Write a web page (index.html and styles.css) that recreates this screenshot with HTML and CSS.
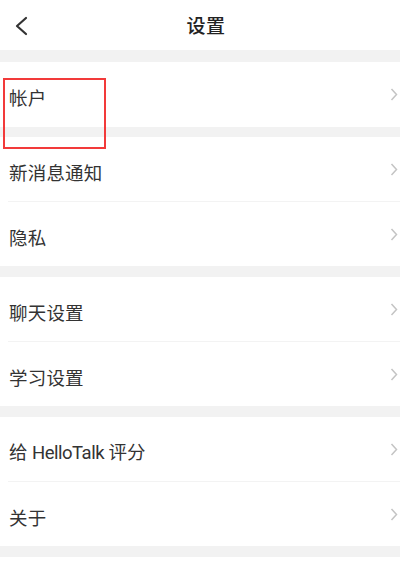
FILE: index.html
```html
<!DOCTYPE html>
<html lang="zh-CN">
<head>
<meta charset="utf-8">
<title>设置</title>
<link rel="stylesheet" href="styles.css">
</head>
<body>
<div class="page">
  <header class="topbar">
    <svg class="back" width="14" height="20" viewBox="0 0 14 20"><path d="M12 2 L3 10 L12 18" fill="none" stroke="#333" stroke-width="2.2" stroke-linecap="round" stroke-linejoin="round"/></svg>
    <h1 class="title">设置</h1>
  </header>
  <div class="gap gap-first"></div>
  <section class="group">
    <div class="row row-tall"><span class="label">帐户</span><svg class="chev" width="8" height="13" viewBox="0 0 8 13"><path d="M1.5 1 L6.5 6.5 L1.5 12" fill="none" stroke="#c4c4c4" stroke-width="1.5"/></svg></div>
  </section>
  <div class="gap gap-second"></div>
  <section class="group">
    <div class="row"><span class="label">新消息通知</span><svg class="chev" width="8" height="13" viewBox="0 0 8 13"><path d="M1.5 1 L6.5 6.5 L1.5 12" fill="none" stroke="#c4c4c4" stroke-width="1.5"/></svg></div>
    <div class="divider"></div>
    <div class="row"><span class="label">隐私</span><svg class="chev" width="8" height="13" viewBox="0 0 8 13"><path d="M1.5 1 L6.5 6.5 L1.5 12" fill="none" stroke="#c4c4c4" stroke-width="1.5"/></svg></div>
  </section>
  <div class="gap"></div>
  <section class="group">
    <div class="row"><span class="label">聊天设置</span><svg class="chev" width="8" height="13" viewBox="0 0 8 13"><path d="M1.5 1 L6.5 6.5 L1.5 12" fill="none" stroke="#c4c4c4" stroke-width="1.5"/></svg></div>
    <div class="divider"></div>
    <div class="row"><span class="label">学习设置</span><svg class="chev" width="8" height="13" viewBox="0 0 8 13"><path d="M1.5 1 L6.5 6.5 L1.5 12" fill="none" stroke="#c4c4c4" stroke-width="1.5"/></svg></div>
  </section>
  <div class="gap"></div>
  <section class="group">
    <div class="row"><span class="label">给 <span class="latin">HelloTalk</span> 评分</span><svg class="chev" width="8" height="13" viewBox="0 0 8 13"><path d="M1.5 1 L6.5 6.5 L1.5 12" fill="none" stroke="#c4c4c4" stroke-width="1.5"/></svg></div>
    <div class="divider"></div>
    <div class="row"><span class="label">关于</span><svg class="chev" width="8" height="13" viewBox="0 0 8 13"><path d="M1.5 1 L6.5 6.5 L1.5 12" fill="none" stroke="#c4c4c4" stroke-width="1.5"/></svg></div>
  </section>
  <div class="gap"></div>
  <div class="highlight"></div>
</div>
</body>
</html>
```
FILE: styles.css
```css
html, body {
  margin: 0;
  padding: 0;
  background: #ffffff;
}
.page {
  position: relative;
  width: 400px;
  min-height: 571px;
  font-family: "Noto Sans CJK SC", "Noto Sans", sans-serif;
  color: #333333;
}
.topbar {
  position: relative;
  height: 50px;
  display: flex;
  align-items: center;
  justify-content: center;
}
.back {
  position: absolute;
  left: 14px;
  top: 16px;
}
.title {
  margin: 0;
  padding-left: 12px;
  font-size: 19px;
  font-weight: 500;
  color: #222222;
  line-height: 50px;
  letter-spacing: 0.5px;
}
.gap {
  height: 11px;
  background: #f2f2f2;
}
.gap-first {
  height: 12px;
}
.gap-second {
  height: 10px;
}
.row {
  height: 64px;
  display: flex;
  align-items: center;
  justify-content: space-between;
  padding: 0 2px 0 9px;
  box-sizing: border-box;
}
.row-tall {
  height: 65px;
}
.label {
  font-size: 18.5px;
  line-height: 24px;
  padding-top: 5px;
  color: #333333;
  letter-spacing: 0.2px;
}
.latin {
  font-family: Roboto, "Noto Sans", sans-serif;
  font-size: 18.5px;
  letter-spacing: -0.5px;
}
.chev {
  display: block;
}
.divider {
  height: 1px;
  margin-left: 8px;
  background: #f3f3f3;
}
.highlight {
  position: absolute;
  left: 3px;
  top: 78px;
  width: 99px;
  height: 67px;
  border: 2px solid #f23a3a;
}
```
